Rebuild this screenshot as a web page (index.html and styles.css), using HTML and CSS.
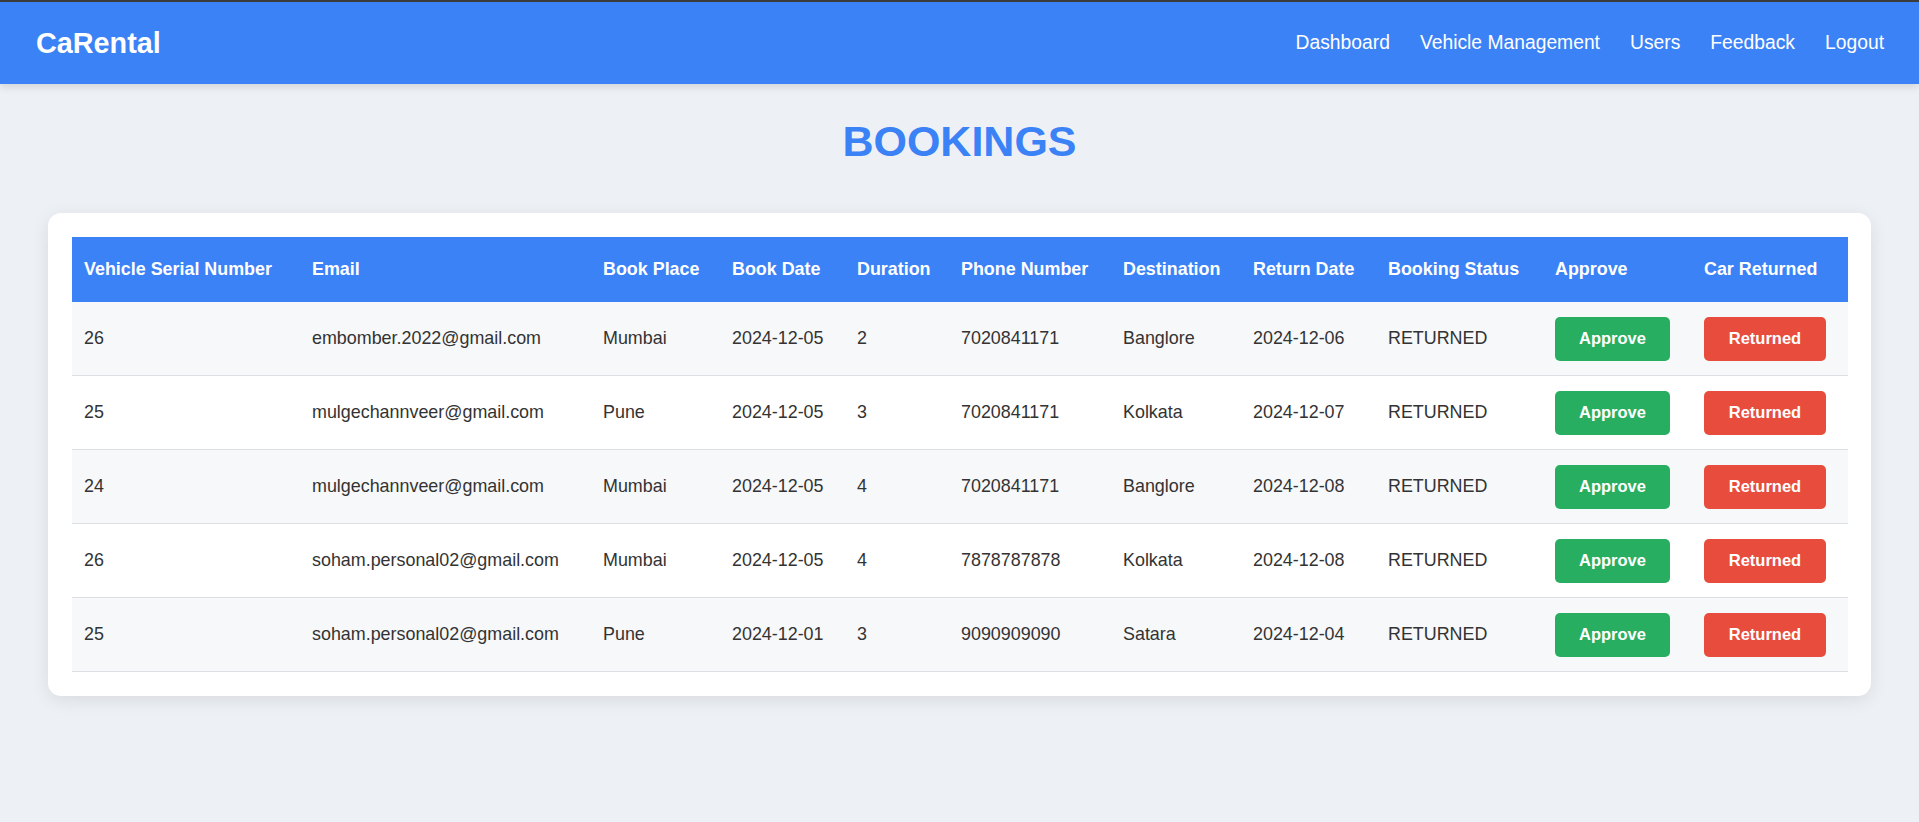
FILE: index.html
```html
<!DOCTYPE html>
<html lang="en">
<head>
<meta charset="utf-8">
<title>CaRental - Bookings</title>
<link rel="stylesheet" href="styles.css">
</head>
<body>
<nav class="navbar">
  <div class="logo">CaRental</div>
  <ul class="nav-links">
    <li><a href="#">Dashboard</a></li>
    <li><a href="#">Vehicle Management</a></li>
    <li><a href="#">Users</a></li>
    <li><a href="#">Feedback</a></li>
    <li><a href="#">Logout</a></li>
  </ul>
</nav>
<main class="content">
  <h1 class="page-title">BOOKINGS</h1>
  <div class="card">
    <table class="bookings">
      <colgroup>
        <col class="c-serial"><col class="c-email"><col class="c-place"><col class="c-date"><col class="c-dur"><col class="c-phone"><col class="c-dest"><col class="c-ret"><col class="c-status"><col class="c-approve"><col class="c-returned">
      </colgroup>
      <thead>
        <tr>
          <th>Vehicle Serial Number</th><th>Email</th><th>Book Place</th><th>Book Date</th><th>Duration</th><th>Phone Number</th><th>Destination</th><th>Return Date</th><th>Booking Status</th><th>Approve</th><th>Car Returned</th>
        </tr>
      </thead>
      <tbody>
        <tr>
          <td>26</td><td>embomber.2022@gmail.com</td><td>Mumbai</td><td>2024-12-05</td><td>2</td><td>7020841171</td><td>Banglore</td><td>2024-12-06</td><td>RETURNED</td>
          <td><button class="btn btn-approve">Approve</button></td><td><button class="btn btn-returned">Returned</button></td>
        </tr>
        <tr>
          <td>25</td><td>mulgechannveer@gmail.com</td><td>Pune</td><td>2024-12-05</td><td>3</td><td>7020841171</td><td>Kolkata</td><td>2024-12-07</td><td>RETURNED</td>
          <td><button class="btn btn-approve">Approve</button></td><td><button class="btn btn-returned">Returned</button></td>
        </tr>
        <tr>
          <td>24</td><td>mulgechannveer@gmail.com</td><td>Mumbai</td><td>2024-12-05</td><td>4</td><td>7020841171</td><td>Banglore</td><td>2024-12-08</td><td>RETURNED</td>
          <td><button class="btn btn-approve">Approve</button></td><td><button class="btn btn-returned">Returned</button></td>
        </tr>
        <tr>
          <td>26</td><td>soham.personal02@gmail.com</td><td>Mumbai</td><td>2024-12-05</td><td>4</td><td>7878787878</td><td>Kolkata</td><td>2024-12-08</td><td>RETURNED</td>
          <td><button class="btn btn-approve">Approve</button></td><td><button class="btn btn-returned">Returned</button></td>
        </tr>
        <tr>
          <td>25</td><td>soham.personal02@gmail.com</td><td>Pune</td><td>2024-12-01</td><td>3</td><td>9090909090</td><td>Satara</td><td>2024-12-04</td><td>RETURNED</td>
          <td><button class="btn btn-approve">Approve</button></td><td><button class="btn btn-returned">Returned</button></td>
        </tr>
      </tbody>
    </table>
  </div>
</main>
</body>
</html>
```
FILE: styles.css
```css
* { box-sizing: border-box; }

html, body {
  margin: 0;
  padding: 0;
}

body {
  background: #edf0f5;
  font-family: "Liberation Sans", Arial, sans-serif;
  color: #333;
  min-height: 822px;
}

.navbar {
  display: flex;
  align-items: center;
  justify-content: space-between;
  height: 84px;
  padding: 0 35px;
  background: #3b82f6;
  border-top: 2px solid #3b3b3b;
  box-shadow: 0 3px 8px rgba(0, 0, 0, 0.12);
  position: relative;
  z-index: 1;
}

.logo {
  color: #fff;
  font-size: 28.8px;
  font-weight: 700;
  padding-left: 1px;
}

.nav-links {
  display: flex;
  gap: 30px;
  list-style: none;
  margin: 0;
  padding: 0;
}

.nav-links a {
  color: #fff;
  text-decoration: none;
  font-size: 19.3px;
}

.content {
  padding: 0 48px;
}

.page-title {
  margin: 33px 0 47px;
  text-align: center;
  font-size: 43px;
  font-weight: 700;
  color: #3b82f6;
  line-height: normal;
}

.card {
  background: #fff;
  border-radius: 13px;
  padding: 24px;
  box-shadow: 0 4px 18px rgba(0, 0, 0, 0.09);
}

.bookings {
  width: 100%;
  border-collapse: collapse;
  table-layout: fixed;
  font-size: 17.9px;
}

.c-serial { width: 228px; }
.c-email { width: 291px; }
.c-place { width: 129px; }
.c-date { width: 125px; }
.c-dur { width: 104px; }
.c-phone { width: 162px; }
.c-dest { width: 130px; }
.c-ret { width: 135px; }
.c-status { width: 167px; }
.c-approve { width: 149px; }
.c-returned { width: 156px; }

.bookings th {
  background: #3b82f6;
  color: #fff;
  font-weight: 700;
  text-align: left;
  padding: 22px 12px;
  line-height: 21px;
  white-space: nowrap;
}

.bookings td {
  padding: 14.5px 12px;
  border-bottom: 1px solid #dcdfe4;
  white-space: nowrap;
  vertical-align: middle;
}

.bookings tbody tr:nth-child(odd) td {
  background: #f7f8fa;
}

.btn {
  display: inline-block;
  border: none;
  border-radius: 5px;
  color: #fff;
  font-family: "Liberation Sans", Arial, sans-serif;
  font-size: 16.5px;
  font-weight: 700;
  line-height: 19px;
  padding: 12.5px 24px;
  cursor: pointer;
}

.btn-approve {
  background: #27ae60;
  width: 115px;
}

.btn-returned {
  background: #e74c3c;
  width: 122px;
}
```
